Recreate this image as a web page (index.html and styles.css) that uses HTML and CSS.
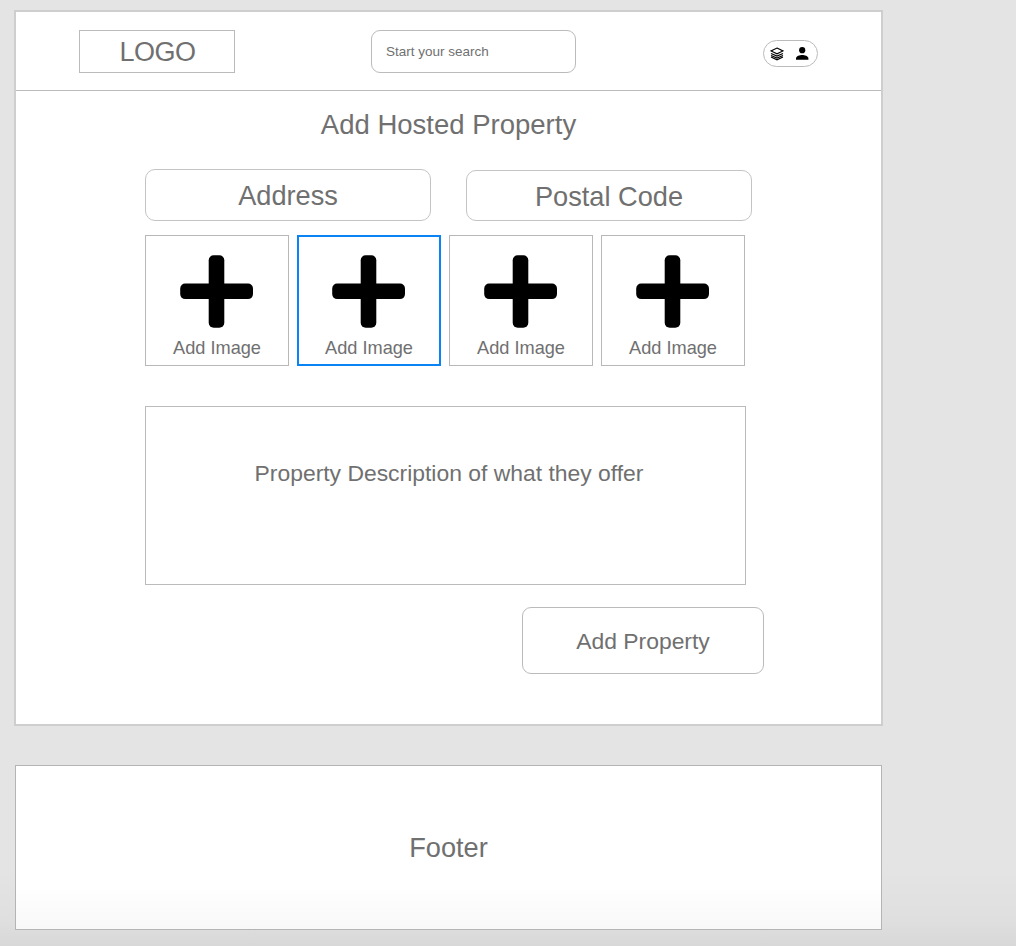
FILE: index.html
```html
<!DOCTYPE html>
<html lang="en">
<head>
<meta charset="utf-8">
<title>Add Hosted Property</title>
<link rel="stylesheet" href="styles.css">
</head>
<body>
<svg class="sprite" aria-hidden="true">
  <symbol id="plus" viewBox="0 0 74 73">
    <rect x="28.7" y="0.2" width="15.6" height="72.6" rx="5"/>
    <rect x="0.2" y="28.5" width="72.8" height="15.6" rx="5"/>
  </symbol>
</svg>
<div class="page">
  <header class="header">
    <div class="logo">LOGO</div>
    <div class="search">Start your search</div>
    <div class="account">
      <svg class="layers" viewBox="0 0 14 14">
        <path d="M7 1 13 3.9 7 6.8 1 3.9Z"/>
        <path d="M1 6.4 7 9.1 13 6.4"/>
        <path d="M1 8.4 7 11.1 13 8.4"/>
        <path d="M1 10.1 7 12.8 13 10.1"/>
      </svg>
      <svg class="person" viewBox="0 0 13 13">
        <circle cx="6.2" cy="3.2" r="3.1"/>
        <path d="M0 12.8v-1.4C0 9.1 3.8 8 6.2 8s6.2 1.1 6.2 3.4v1.4z"/>
      </svg>
    </div>
  </header>
  <main class="content">
    <h1 class="title">Add Hosted Property</h1>
    <div class="fields">
      <div class="field address">Address</div>
      <div class="field postal">Postal Code</div>
    </div>
    <div class="images">
      <div class="tile"><svg class="plus"><use href="#plus"/></svg><span>Add Image</span></div>
      <div class="tile selected"><svg class="plus"><use href="#plus"/></svg><span>Add Image</span></div>
      <div class="tile"><svg class="plus"><use href="#plus"/></svg><span>Add Image</span></div>
      <div class="tile"><svg class="plus"><use href="#plus"/></svg><span>Add Image</span></div>
    </div>
    <div class="description">Property Description of what they offer</div>
    <div class="submit">Add Property</div>
  </main>
</div>
<footer class="footer">Footer</footer>
</body>
</html>
```
FILE: styles.css
```css
* { box-sizing: border-box; }
body {
  margin: 0;
  height: 946px;
  padding: 10px 0 0 14px;
  overflow: hidden;
  background: linear-gradient(#e4e4e4 870px, #dfdfdf 920px, #d8d8d8 946px);
  color: #707070;
  font-family: "Liberation Sans", Arial, sans-serif;
  white-space: nowrap;
}
.sprite { display: none; }
.page {
  width: 869px;
  height: 716px;
  border: 2px solid #cecece;
  background: #fff;
}
.header {
  display: flex;
  align-items: flex-start;
  height: 79px;
  padding: 18px 63px 0;
  border-bottom: 1px solid #bbb;
}
.logo {
  width: 156px;
  height: 43px;
  padding-left: 1px;
  border: 1px solid #bbb;
  font-size: 27px;
  line-height: 43px;
  text-align: center;
  letter-spacing: -0.5px;
}
.search {
  width: 205px;
  height: 43px;
  margin-left: 136px;
  padding-left: 14px;
  border: 1px solid #bbb;
  border-radius: 9px;
  font-size: 13.5px;
  line-height: 41px;
}
.account {
  display: flex;
  align-items: center;
  width: 55px;
  height: 27px;
  margin: 10px 0 0 187px;
  padding-left: 6px;
  border: 1px solid #bbb;
  border-radius: 14px;
}
.layers {
  width: 14px;
  height: 14px;
  fill: none;
  stroke: #000;
  stroke-width: 1.1;
}
.person { width: 13px; height: 13px; margin-left: 12px; }
.content { padding: 18px 0 0 129px; }
.title {
  width: 607px;
  margin: 0;
  font-size: 27.5px;
  font-weight: 400;
  line-height: 32px;
  text-align: center;
}
.fields { display: flex; gap: 35px; padding-top: 28px; }
.field {
  width: 286px;
  height: 52px;
  border: 1px solid #c4c4c4;
  border-radius: 10px;
  font-size: 27.2px;
  line-height: 51px;
  text-align: center;
}
.postal { height: 51px; margin-top: 1px; }
.images { display: flex; gap: 8px; margin-top: 14px; }
.tile {
  display: flex;
  flex-direction: column;
  align-items: center;
  width: 144px;
  height: 131px;
  padding-top: 19px;
  border: 1px solid #b8b8b8;
  font-size: 18.2px;
  line-height: 22px;
}
.tile.selected { padding-top: 18px; border: 2px solid #0a84f5; }
.plus { width: 74px; height: 73px; margin-bottom: 9px; flex: none; }
.description {
  width: 601px;
  height: 179px;
  margin-top: 40px;
  padding: 53px 0 0 7px;
  border: 1px solid #bbb;
  font-size: 22.9px;
  line-height: 26px;
  text-align: center;
}
.submit {
  width: 242px;
  height: 67px;
  margin: 22px 0 0 377px;
  border: 1px solid #bbb;
  border-radius: 9px;
  font-size: 22.9px;
  line-height: 67px;
  text-align: center;
}
.footer {
  width: 867px;
  height: 165px;
  margin: 39px 0 0 1px;
  border: 1px solid #b4b4b4;
  background: linear-gradient(#fff 120px, #f8f8f8);
  font-size: 27.2px;
  line-height: 163px;
  text-align: center;
}
```
